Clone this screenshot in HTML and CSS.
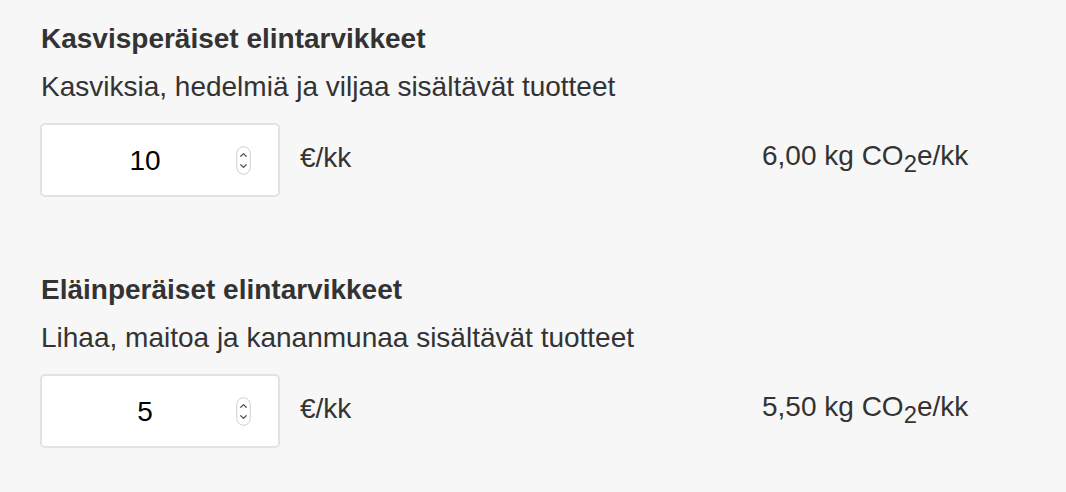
FILE: index.html
```html
<!DOCTYPE html>
<html lang="fi">
<head>
    <meta charset="UTF-8">
    <title>Ruoka</title>
    <link rel="stylesheet" href="styles.css">
</head>
<body>
    <div class="container">
        <section class="item">
            <h2>Kasvisperäiset elintarvikkeet</h2>
            <p class="desc">Kasviksia, hedelmiä ja viljaa sisältävät tuotteet</p>
            <div class="row">
                <div class="box">
                    <input type="text" class="amount" value="10">
                    <svg class="spin" width="15" height="29" viewBox="0 0 15 29">
                        <rect x="0.75" y="0.75" width="13.5" height="27.5" rx="6.75" fill="#fff" stroke="#cfcfcf" stroke-width="1"/>
                        <path d="M4.8 10.2 L7.5 7.6 L10.2 10.2" fill="none" stroke="#555" stroke-width="1.3" stroke-linecap="round" stroke-linejoin="round"/>
                        <path d="M4.8 18.8 L7.5 21.4 L10.2 18.8" fill="none" stroke="#555" stroke-width="1.3" stroke-linecap="round" stroke-linejoin="round"/>
                    </svg>
                </div>
                <span class="unit">€/kk</span>
                <span class="result">6,00 kg CO<sub>2</sub>e/kk</span>
            </div>
        </section>

        <section class="item">
            <h2>Eläinperäiset elintarvikkeet</h2>
            <p class="desc">Lihaa, maitoa ja kananmunaa sisältävät tuotteet</p>
            <div class="row">
                <div class="box">
                    <input type="text" class="amount" value="5">
                    <svg class="spin" width="15" height="29" viewBox="0 0 15 29">
                        <rect x="0.75" y="0.75" width="13.5" height="27.5" rx="6.75" fill="#fff" stroke="#cfcfcf" stroke-width="1"/>
                        <path d="M4.8 10.2 L7.5 7.6 L10.2 10.2" fill="none" stroke="#555" stroke-width="1.3" stroke-linecap="round" stroke-linejoin="round"/>
                        <path d="M4.8 18.8 L7.5 21.4 L10.2 18.8" fill="none" stroke="#555" stroke-width="1.3" stroke-linecap="round" stroke-linejoin="round"/>
                    </svg>
                </div>
                <span class="unit">€/kk</span>
                <span class="result">5,50 kg CO<sub>2</sub>e/kk</span>
            </div>
        </section>
    </div>
</body>
</html>
```

FILE: styles.css
```css
/* General Styles */
body {
    font-family: "Liberation Sans", Arial, sans-serif;
    background-color: #f7f7f7;
    color: #333;
    margin: 0;
    padding: 0;
    overflow: hidden;
}

.container {
    padding: 15px 40px 0 41px;
}

/* Item */
.item + .item {
    margin-top: 69px;
}

.item h2 {
    font-size: 28px;
    font-weight: bold;
    line-height: 48px;
    margin: 0;
}

.desc {
    font-size: 28px;
    line-height: 48px;
    margin: 0 0 12px;
}

/* Input row */
.row {
    display: grid;
    grid-template-columns: 240px 442px auto;
    align-items: center;
    column-gap: 20px;
    margin-left: -1px;
}

.box {
    display: flex;
    align-items: center;
    height: 74px;
    box-sizing: border-box;
    background: white;
    border: 2px solid #e2e2e2;
    border-radius: 5px;
}

.amount {
    flex: 1;
    min-width: 0;
    border: none;
    background: transparent;
    font-family: inherit;
    font-size: 28px;
    color: #000;
    text-align: center;
    padding: 2px 0 0 12px;
    outline: none;
}

.spin {
    flex: none;
    margin-right: 27px;
}

.unit,
.result {
    font-size: 28px;
    margin-top: -4px;
}

.result {
    margin-top: -8px;
}

.result sub {
    font-size: 0.85em;
    vertical-align: -0.3em;
    line-height: 0;
}
```
